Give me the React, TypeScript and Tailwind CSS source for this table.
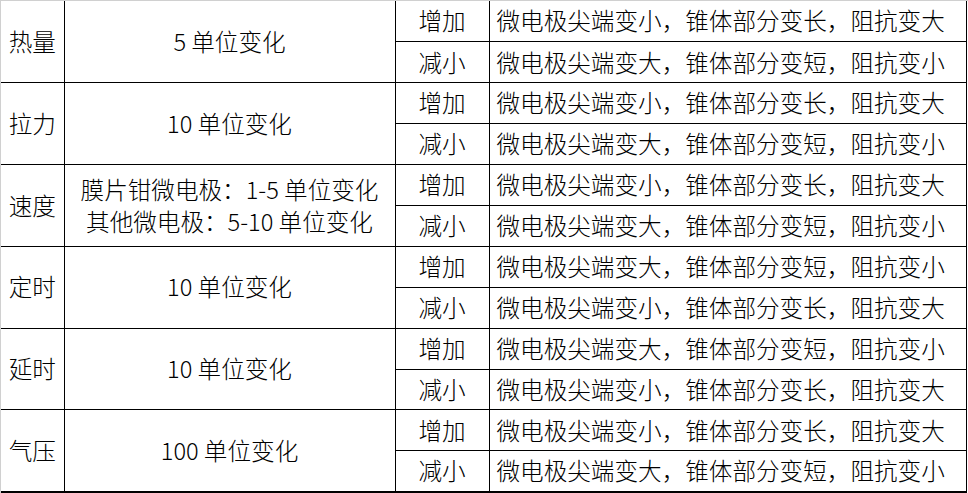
const groups = [
  {
    name: "热量",
    range: ["5 单位变化"],
    up: "微电极尖端变小，锥体部分变长，阻抗变大",
    down: "微电极尖端变大，锥体部分变短，阻抗变小",
  },
  {
    name: "拉力",
    range: ["10 单位变化"],
    up: "微电极尖端变小，锥体部分变长，阻抗变大",
    down: "微电极尖端变大，锥体部分变短，阻抗变小",
  },
  {
    name: "速度",
    range: ["膜片钳微电极：1-5 单位变化", "其他微电极：5-10 单位变化"],
    up: "微电极尖端变小，锥体部分变长，阻抗变大",
    down: "微电极尖端变大，锥体部分变短，阻抗变小",
  },
  {
    name: "定时",
    range: ["10 单位变化"],
    up: "微电极尖端变大，锥体部分变短，阻抗变小",
    down: "微电极尖端变小，锥体部分变长，阻抗变大",
  },
  {
    name: "延时",
    range: ["10 单位变化"],
    up: "微电极尖端变大，锥体部分变短，阻抗变小",
    down: "微电极尖端变小，锥体部分变长，阻抗变大",
  },
  {
    name: "气压",
    range: ["100 单位变化"],
    up: "微电极尖端变小，锥体部分变长，阻抗变大",
    down: "微电极尖端变大，锥体部分变短，阻抗变小",
  },
];

export default function App() {
  return (
    <div
      className="w-[968px] h-[493px] bg-white border-l border-t border-[#d0d0d0] overflow-hidden text-black text-[23.6px] font-light leading-none"
      style={{ fontFamily: '"Noto Sans CJK SC", sans-serif' }}
    >
      <table className="w-[965px] table-fixed border-collapse">
        <colgroup>
          <col className="w-[63px]" />
          <col className="w-[331px]" />
          <col className="w-[94px]" />
          <col className="w-[477px]" />
        </colgroup>
        <tbody>
          {groups.map((g, i) => {
            const last = i === groups.length - 1;
            const top = i === 0 ? "" : "border-t border-black";
            const bottom = last ? "border-b-2 border-b-black" : "";
            return [
              <tr key={g.name + "-up"} className="h-[40.9px]">
                <td rowSpan={2} className={`${top} ${bottom} text-center align-middle`}>
                  {g.name}
                </td>
                <td rowSpan={2} className={`${top} ${bottom} border-l border-black text-center align-middle`}>
                  {g.range.map((line) => (
                    <div key={line} className={g.range.length > 1 ? "h-[32px] flex items-center justify-center" : ""}>
                      {line}
                    </div>
                  ))}
                </td>
                <td className={`${top} border-l border-black text-center align-middle`}>增加</td>
                <td className={`${top} border-l border-r border-black pl-[7px] align-middle whitespace-nowrap`}>
                  {g.up}
                </td>
              </tr>,
              <tr key={g.name + "-down"} className="h-[40.9px]">
                <td className={`border-t border-l border-black ${bottom} text-center align-middle`}>减小</td>
                <td className={`border-t border-l border-r border-black ${bottom} pl-[7px] align-middle whitespace-nowrap`}>
                  {g.down}
                </td>
              </tr>,
            ];
          })}
        </tbody>
      </table>
    </div>
  );
}
